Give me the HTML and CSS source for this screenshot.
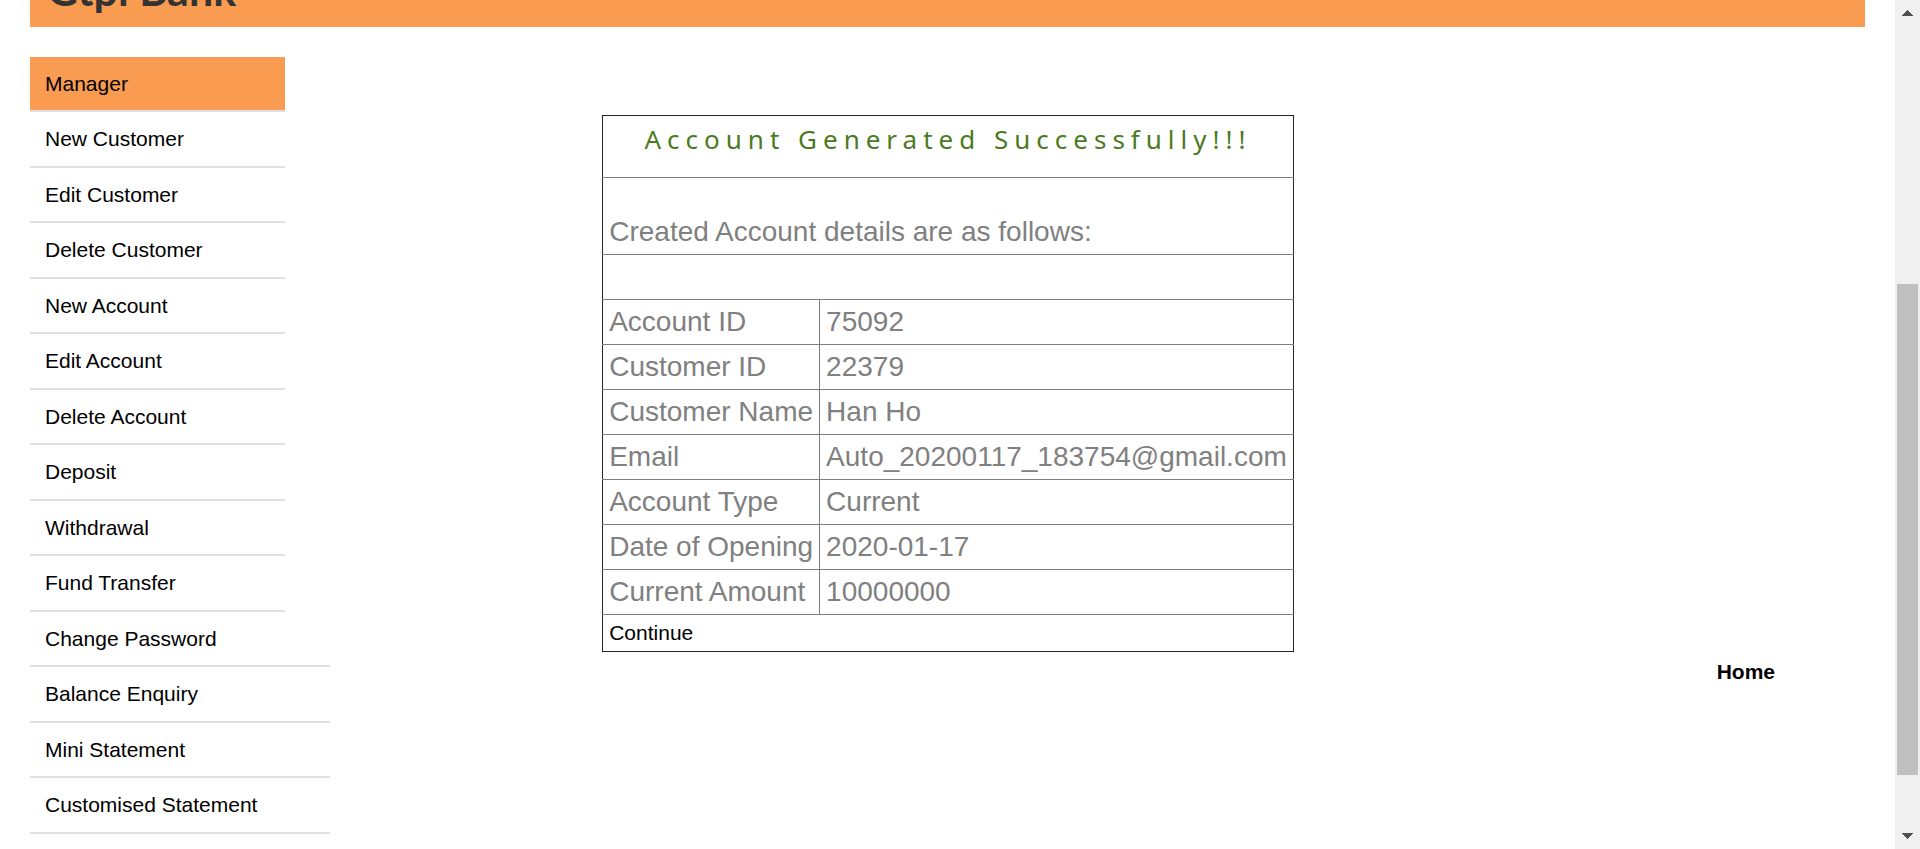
FILE: index.html
```html
<!DOCTYPE html>
<html lang="en">
<head>
<meta charset="utf-8">
<title>Gtpl Bank Manager HomePage</title>
<link rel="stylesheet" href="styles.css">
</head>
<body>
<div class="page">
  <header class="banner"><h1 class="brand">Gtpl Bank</h1></header>
  <div class="columns">
    <nav>
      <ul class="menu">
        <li class="active"><a href="#">Manager</a></li>
        <li><a href="#">New Customer</a></li>
        <li><a href="#">Edit Customer</a></li>
        <li><a href="#">Delete Customer</a></li>
        <li><a href="#">New Account</a></li>
        <li><a href="#">Edit Account</a></li>
        <li><a href="#">Delete Account</a></li>
        <li><a href="#">Deposit</a></li>
        <li><a href="#">Withdrawal</a></li>
        <li><a href="#">Fund Transfer</a></li>
        <li class="wide"><a href="#">Change Password</a></li>
        <li class="wide"><a href="#">Balance Enquiry</a></li>
        <li class="wide"><a href="#">Mini Statement</a></li>
        <li class="wide"><a href="#">Customised Statement</a></li>
      </ul>
    </nav>
    <main class="content">
      <table class="details">
        <tr><td colspan="2" class="title"><h2 class="heading">Account Generated Successfully!!!</h2></td></tr>
        <tr><td colspan="2" class="intro">Created Account details are as follows:</td></tr>
        <tr><td colspan="2" class="blank"></td></tr>
        <tr><td>Account ID</td><td>75092</td></tr>
        <tr><td>Customer ID</td><td>22379</td></tr>
        <tr><td>Customer Name</td><td>Han Ho</td></tr>
        <tr><td>Email</td><td>Auto_20200117_183754@gmail.com</td></tr>
        <tr><td>Account Type</td><td>Current</td></tr>
        <tr><td>Date of Opening</td><td>2020-01-17</td></tr>
        <tr><td>Current Amount</td><td>10000000</td></tr>
        <tr><td colspan="2" class="action"><a href="#">Continue</a></td></tr>
      </table>
      <a class="home" href="#">Home</a>
    </main>
  </div>
</div>
<div class="scrollbar" aria-hidden="true">
  <svg width="11" height="6" viewBox="0 0 11 6"><path d="M5 0h1v1h1v1h1v1h1v1h1v1h1v1H0V5h1V4h1V3h1V2h1V1h1z"/></svg>
  <div class="track"><div class="thumb"></div></div>
  <svg width="11" height="6" viewBox="0 0 11 6"><path d="M0 0h11v1h-1v1H9v1H8v1H7v1H6v1H5V5H4V4H3V3H2V2H1V1H0z"/></svg>
</div>
</body>
</html>
```

FILE: styles.css
```css
* { box-sizing: border-box; }

body {
  margin: 0;
  height: 100vh;
  display: flex;
  overflow: hidden;
  background: #fff;
  color: #000;
  font-family: "Liberation Sans", Arial, sans-serif;
  font-size: 21px;
}

a { color: inherit; text-decoration: none; }

.page {
  flex: 1;
  min-width: 0;
  padding: 0 30px;
}

.banner {
  display: flex;
  align-items: flex-end;
  height: 27px;
  padding: 0 17px 11px;
  overflow: hidden;
  background: #f99b50;
}

.brand {
  margin: 0;
  color: #333;
  font: 700 43px/52px Lato, sans-serif;
}

.columns {
  display: flex;
  padding-top: 30px;
}

.menu {
  width: 255px;
  margin: 0;
  padding: 0;
  list-style: none;
}

.menu li {
  height: 55px;
  padding: 14px 15px;
  border-bottom: 2px solid #e0e0e0;
  line-height: 26px;
  white-space: nowrap;
}

.menu li:nth-child(even) { height: 56px; }
.menu .active { background: #f99b50 padding-box; }
.menu .wide { width: 300px; }

.content {
  flex: 1;
  display: flex;
  flex-direction: column;
  padding: 58px 90px 0 0;
}

.details {
  align-self: center;
  margin-right: 164px;
  border-collapse: collapse;
  color: gray;
  font-size: 28px;
  line-height: 32px;
}

.details td {
  padding: 6px;
  border: 1px solid gray;
}

.details td:first-child { border-left-color: #222; }
.details td:last-child { border-right-color: #222; }
.details tr:first-child td { border-top-color: #222; }
.details tr:last-child td { border-bottom-color: #222; }

.details .title { padding: 5px 6px 20px; }
.details .intro { padding-top: 38px; }
.details .blank { height: 45px; }

.heading {
  margin: 0;
  color: #4b7a22;
  font: 400 26px/36px "Noto Sans", "Open Sans", sans-serif;
  letter-spacing: 6px;
  text-align: center;
}

.details .action {
  color: #000;
  font-size: 21px;
  line-height: 24px;
}

.home {
  align-self: flex-end;
  margin-top: 8px;
  font-weight: 700;
  line-height: 24px;
}

.scrollbar {
  display: flex;
  flex-direction: column;
  align-items: center;
  width: 25px;
  padding: 10px 0;
  background: #f0f0f0;
}

.scrollbar svg { fill: #505050; }

.track {
  flex: 1;
  width: 21px;
  padding: 268px 0 58px;
}

.thumb {
  height: 100%;
  background: #c0c0c0;
}
```
